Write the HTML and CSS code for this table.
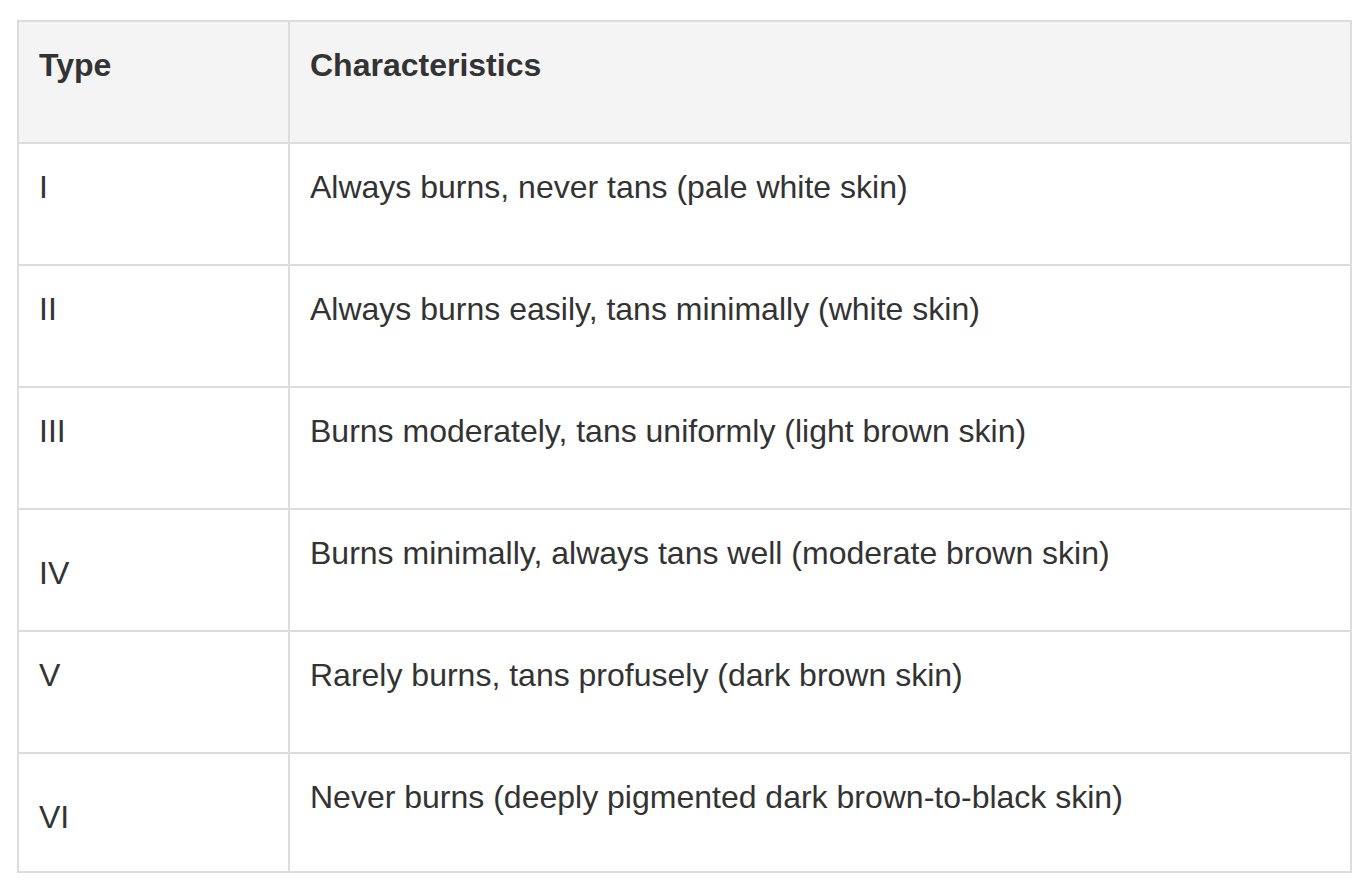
FILE: index.html
```html
<!DOCTYPE html>
<html lang="en">
<head>
<meta charset="utf-8">
<title>Skin types</title>
<link rel="stylesheet" href="styles.css">
</head>
<body>
<table class="skin-table">
  <colgroup>
    <col class="col-type">
    <col class="col-char">
  </colgroup>
  <thead>
    <tr>
      <th>Type</th>
      <th>Characteristics</th>
    </tr>
  </thead>
  <tbody>
    <tr>
      <td>I</td>
      <td>Always burns, never tans (pale white skin)</td>
    </tr>
    <tr>
      <td>II</td>
      <td>Always burns easily, tans minimally (white skin)</td>
    </tr>
    <tr>
      <td>III</td>
      <td>Burns moderately, tans uniformly (light brown skin)</td>
    </tr>
    <tr>
      <td class="lowered">IV</td>
      <td>Burns minimally, always tans well (moderate brown skin)</td>
    </tr>
    <tr>
      <td>V</td>
      <td>Rarely burns, tans profusely (dark brown skin)</td>
    </tr>
    <tr class="last">
      <td class="lowered">VI</td>
      <td>Never burns (deeply pigmented dark brown-to-black skin)</td>
    </tr>
  </tbody>
</table>
</body>
</html>
```
FILE: styles.css
```css
html, body {
  margin: 0;
  padding: 0;
  background: #ffffff;
}

body {
  padding: 20px 17px 0;
  font-family: "Liberation Sans", Arial, Helvetica, sans-serif;
  color: #333333;
}

.skin-table {
  width: 100%;
  border-collapse: separate;
  border-spacing: 0;
  border-top: 2px solid #dddddd;
  border-left: 2px solid #dddddd;
  table-layout: fixed;
  font-size: 32px;
  line-height: 48px;
}

.col-type {
  width: 271px;
}

.skin-table th,
.skin-table td {
  border-right: 2px solid #dddddd;
  border-bottom: 2px solid #dddddd;
  padding: 19px 20px 0;
  text-align: left;
  vertical-align: top;
}

.skin-table th {
  font-weight: bold;
  background: #f4f4f4;
}

.skin-table tr {
  height: 122px;
}

.skin-table tr.last {
  height: 119px;
}

.skin-table td.lowered {
  padding-top: 39px;
}
```
